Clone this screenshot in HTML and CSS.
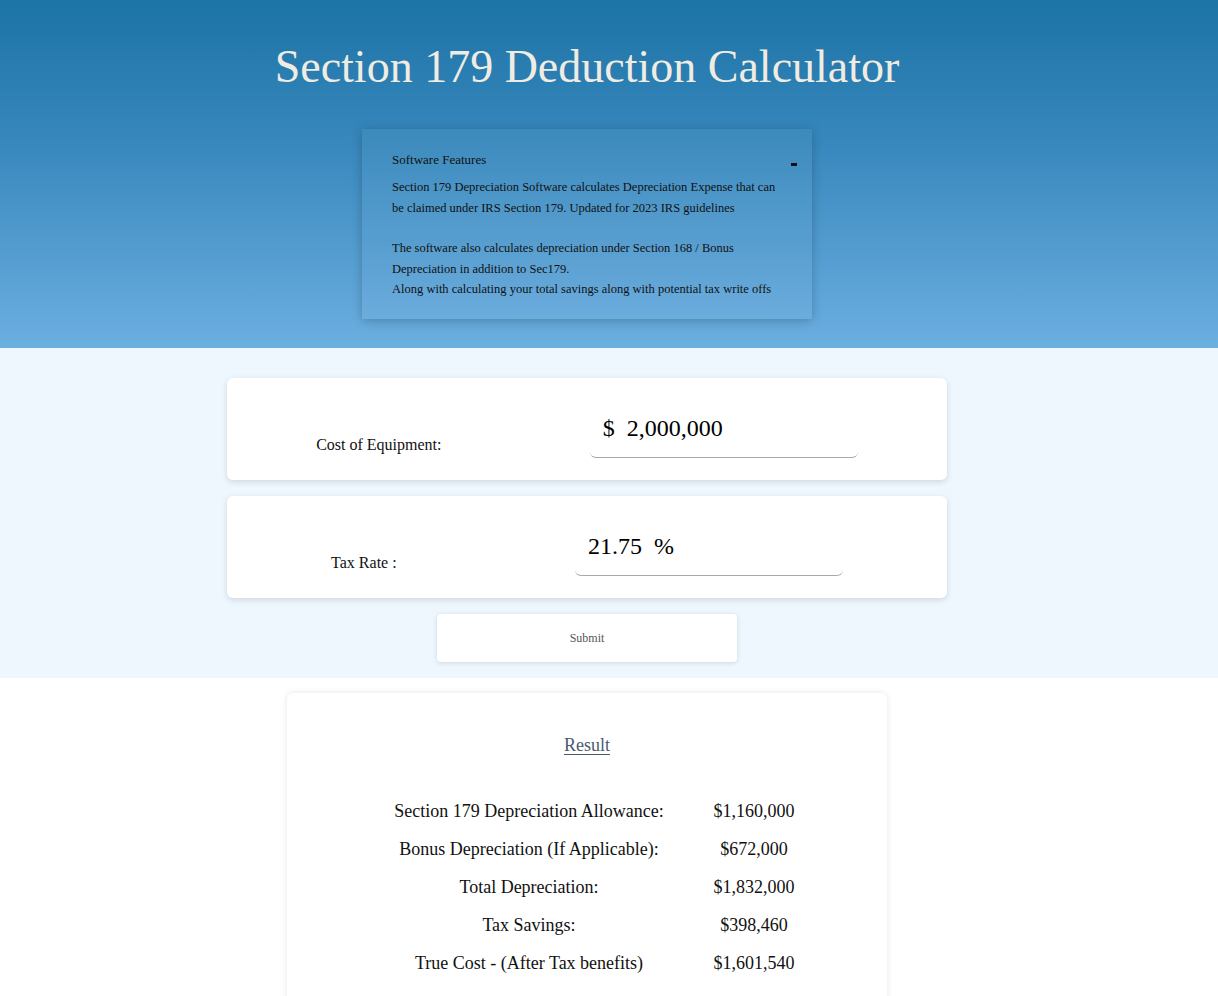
FILE: index.html
```html
<!DOCTYPE html>
<html lang="en">
<head>
<meta charset="utf-8">
<title>Section 179 Deduction Calculator</title>
<link rel="stylesheet" href="styles.css">
</head>
<body>
<header class="hero">
  <div class="column">
    <h1 class="title">Section 179 Deduction Calculator</h1>
    <section class="features">
      <div class="features-head">
        <h2 class="features-title">Software Features</h2>
        <span class="toggle" aria-label="collapse"></span>
      </div>
      <p class="features-text">Section 179 Depreciation Software calculates Depreciation Expense that can be claimed under IRS Section 179. Updated for 2023 IRS guidelines</p>
      <p class="features-text gap">The software also calculates depreciation under Section 168 / Bonus Depreciation in addition to Sec179.<br>Along with calculating your total savings along with potential tax write offs</p>
    </section>
  </div>
</header>

<main class="calc">
  <div class="column stack">
    <div class="card">
      <label class="card-label" for="cost">Cost of Equipment:</label>
      <div class="field-wrap"><input id="cost" class="field" type="text" value="$  2,000,000"></div>
    </div>
    <div class="card">
      <label class="card-label" for="rate">Tax Rate :</label>
      <div class="field-wrap"><input id="rate" class="field" type="text" value="21.75  %"></div>
    </div>
    <button class="submit" type="button">Submit</button>
  </div>
</main>

<section class="results">
  <div class="column">
    <div class="result-card">
      <h3 class="result-title">Result</h3>
      <div class="result-grid">
        <div class="r-label">Section 179 Depreciation Allowance:</div><div class="r-value">$1,160,000</div>
        <div class="r-label">Bonus Depreciation (If Applicable):</div><div class="r-value">$672,000</div>
        <div class="r-label">Total Depreciation:</div><div class="r-value">$1,832,000</div>
        <div class="r-label">Tax Savings:</div><div class="r-value">$398,460</div>
        <div class="r-label">True Cost - (After Tax benefits)</div><div class="r-value">$1,601,540</div>
      </div>
    </div>
  </div>
</section>
</body>
</html>
```

FILE: styles.css
```css
* { box-sizing: border-box; }

html, body {
  margin: 0;
  padding: 0;
  background: #ffffff;
  font-family: "Liberation Serif", "Times New Roman", serif;
  color: #111111;
}

.column {
  display: flex;
  flex-direction: column;
  align-items: center;
  padding-right: 44px;
}

/* ---------- header ---------- */
.hero {
  height: 348px;
  background: linear-gradient(180deg, #1c73a5 0%, #3787bc 40%, #6cafe1 100%);
  padding-top: 40px;
}

.title {
  margin: 0;
  font-size: 46px;
  line-height: 54px;
  font-weight: normal;
  color: #f1ece2;
  text-align: center;
}

.features {
  margin-top: 35px;
  width: 450px;
  padding: 21px 30px 19px;
  background: rgba(255, 255, 255, 0.04);
  box-shadow: 0 2px 10px rgba(0, 0, 0, 0.22);
}

.features-head {
  display: flex;
  justify-content: space-between;
  align-items: flex-start;
  margin-right: -15px;
}

.features-title {
  margin: 0;
  font-size: 13px;
  line-height: 20px;
  font-weight: normal;
  color: #111;
}

.toggle {
  display: block;
  width: 6px;
  height: 3px;
  margin-top: 13px;
  background: #111;
}

.features-text {
  margin: 7px 0 0;
  font-size: 12.5px;
  line-height: 20.5px;
  color: #111;
}

.features-text.gap {
  margin-top: 20px;
}

/* ---------- calculator ---------- */
.calc {
  background: #eef6fe;
  padding: 30px 0 16px;
}

.stack {
  gap: 16px;
}

.card {
  width: 720px;
  height: 102px;
  padding: 20px 0 22px;
  display: flex;
  justify-content: space-around;
  align-items: flex-end;
  background: #ffffff;
  border-radius: 6px;
  box-shadow: 0 2px 6px rgba(0, 0, 0, 0.13);
}

.card-label {
  padding: 0 30px 3px;
  font-size: 16px;
  line-height: 20px;
  color: #111;
}

.field-wrap {
  width: 298px;
  align-self: stretch;
}

.field {
  display: block;
  width: 268px;
  height: 60px;
  padding: 2px 13px 0;
  border: none;
  border-bottom: 1px solid #a9a9a9;
  border-radius: 6px;
  background: transparent;
  font-family: "Liberation Serif", "Times New Roman", serif;
  font-size: 24px;
  color: #000;
  white-space: pre;
}

.submit {
  width: 300px;
  height: 48px;
  border: none;
  border-radius: 4px;
  background: #ffffff;
  box-shadow: 0 1px 5px rgba(0, 0, 0, 0.13);
  font-family: "Liberation Serif", "Times New Roman", serif;
  font-size: 12px;
  color: #555;
}

/* ---------- results ---------- */
.results {
  padding-top: 15px;
}

.result-card {
  width: 600px;
  min-height: 330px;
  padding: 40px 0 30px;
  background: #ffffff;
  border-radius: 6px;
  box-shadow: 0 0 6px rgba(0, 0, 0, 0.1);
  display: flex;
  flex-direction: column;
  align-items: center;
}

.result-title {
  margin: 0;
  font-size: 18px;
  line-height: 24px;
  font-weight: normal;
  color: #4a5a6e;
  text-decoration: underline;
  text-underline-offset: 3px;
}

.result-grid {
  margin-top: 35px;
  display: grid;
  grid-template-columns: 334px 116px;
  grid-auto-rows: 38px;
  align-items: center;
  font-size: 18px;
  color: #111;
}

.r-label,
.r-value {
  text-align: center;
  white-space: nowrap;
}
```
